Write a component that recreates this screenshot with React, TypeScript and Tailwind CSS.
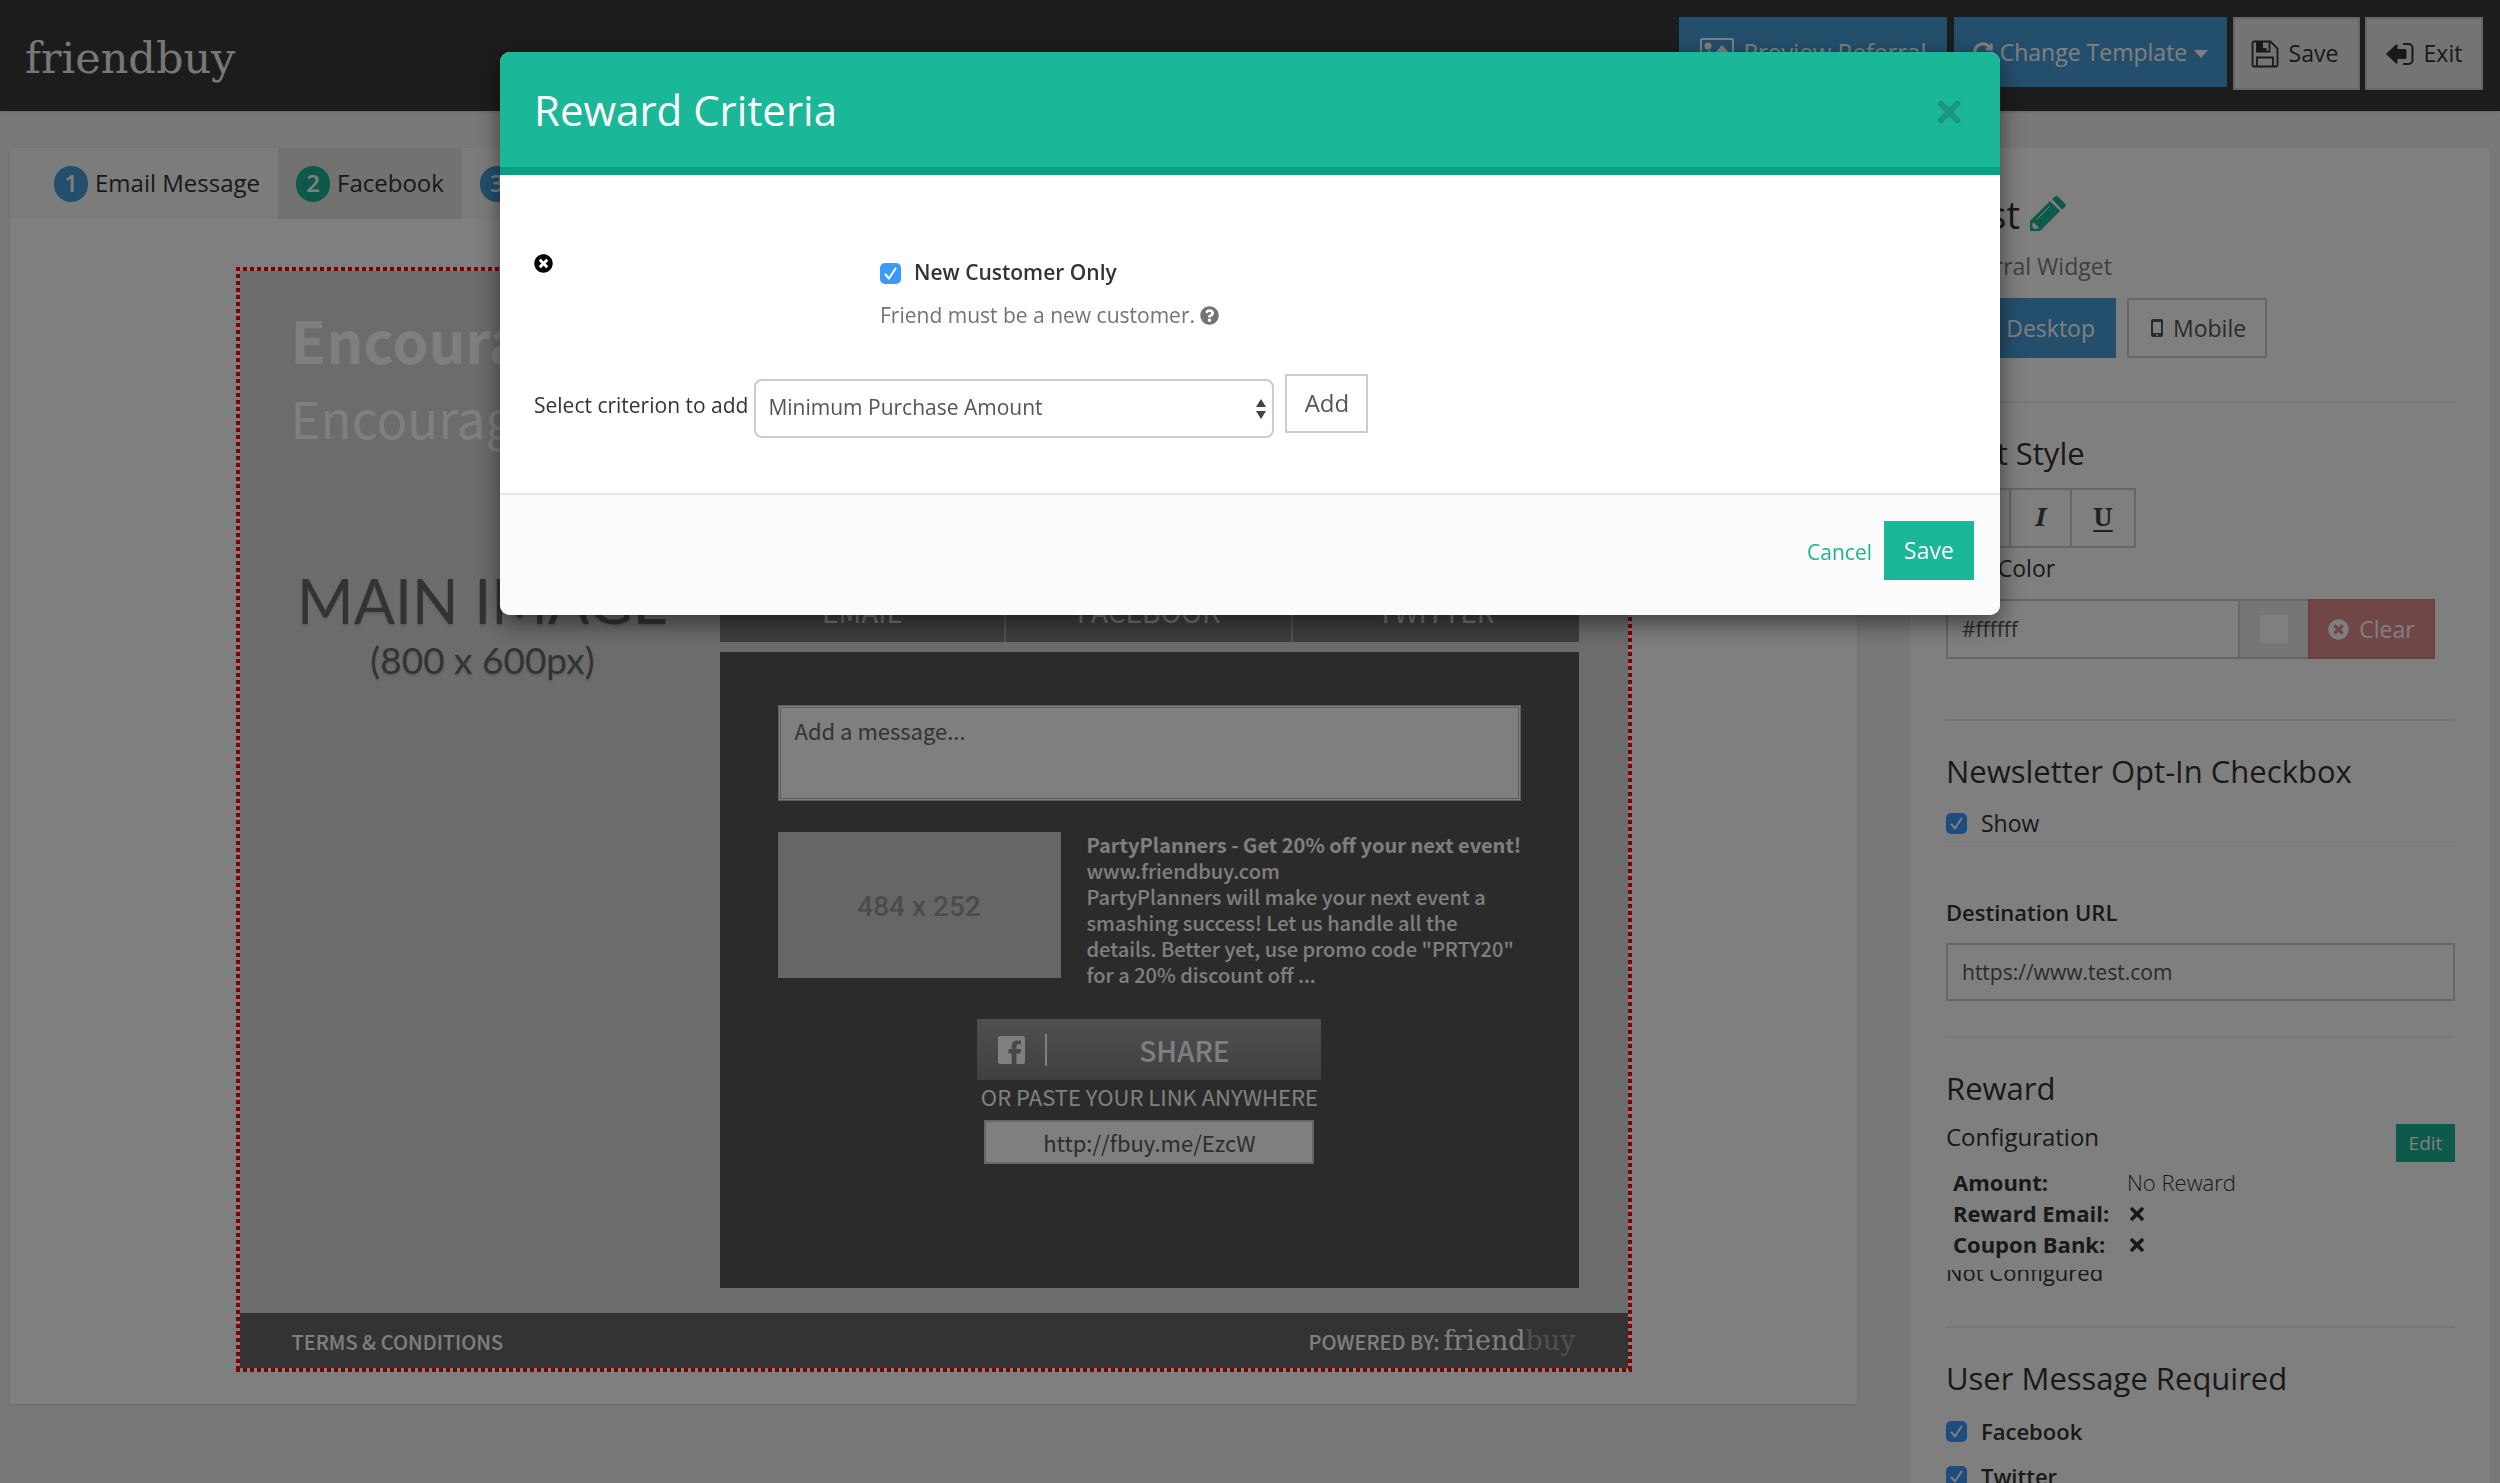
import { FaTimes, FaTimesCircle, FaQuestionCircle, FaDesktop, FaRedoAlt } from "react-icons/fa";
import type { ReactNode } from "react";

function PictureIcon() {
  return (
    <svg viewBox="0 0 34 28" className="h-7 w-[34px]" fill="currentColor" aria-hidden="true">
      <path fillRule="evenodd" d="M2 0h30a2 2 0 0 1 2 2v24a2 2 0 0 1-2 2H2a2 2 0 0 1-2-2V2a2 2 0 0 1 2-2zm0 2v24h30V2z" />
      <circle cx="8" cy="8" r="3.5" />
      <path d="M4 24v-7l5-5 5 4 8-9 9 10v7z" />
    </svg>
  );
}

function FloppyIcon() {
  return (
    <svg viewBox="0 0 28 28" className="size-7" fill="none" stroke="currentColor" strokeWidth="1.8" aria-hidden="true">
      <path d="M2.5 1.5h17l7 7v16.500a1.500 1.500 0 0 1-1.500 1.500h-22a1.500 1.500 0 0 1-1.500-1.500v-22a1.500 1.500 0 0 1 1-1.500z" />
      <path d="M6 26v-8.500h16v8.500M6 2v9.500h12.500v-9.500" />
      <path d="M6 2h6v9.500H6zM12 8h3.500v3h-3.500z" fill="currentColor" stroke="none" />
    </svg>
  );
}

function ExitIcon() {
  return (
    <svg viewBox="0 0 28 24" className="h-6 w-7" aria-hidden="true">
      <path d="M0 12 10 2.500q1.500-1 1.500 1V7H19a1.500 1.500 0 0 1 1.500 1.500v7A1.500 1.500 0 0 1 19 17h-7.500v3.500q0 2-1.500 1z" fill="currentColor" />
      <path d="M17 2h5.500a4 4 0 0 1 4 4v12a4 4 0 0 1-4 4H17" fill="none" stroke="currentColor" strokeWidth="2" />
    </svg>
  );
}

function PencilIcon() {
  return (
    <svg viewBox="0 0 36 36" className="size-9" aria-hidden="true">
      <path d="M0 25 20 5 30 15 10 35H0z" fill="#1ab394" />
      <path d="M22 3 24.500.800q1.700-1.500 3.500 0L35 7.500q1.500 1.800 0 3.500L32 13.500z" fill="#1ab394" />
      <path d="M7 23 20 10" stroke="#fff" strokeWidth="1" />
      <path d="M3.500 26.500 9 31.500 7 33 3 32.500 2 28z" fill="#fff" />
    </svg>
  );
}

function PhoneIcon() {
  return (
    <svg viewBox="0 0 12 18" className="h-[18px] w-3" aria-hidden="true">
      <path fillRule="evenodd" fill="currentColor" d="M2 0h8a2 2 0 0 1 2 2v14a2 2 0 0 1-2 2H2a2 2 0 0 1-2-2V2a2 2 0 0 1 2-2zm0 3v11h8V3zm4 12a1 1 0 1 0 0 2 1 1 0 0 0 0-2z" />
    </svg>
  );
}

function CaretIcon() {
  return (
    <svg viewBox="0 0 14 8" className="mt-1 h-2 w-[14px]" aria-hidden="true">
      <path d="M0 0h14L7 8z" fill="currentColor" />
    </svg>
  );
}

function Checkbox({ id }: { id: string }) {
  return (
    <span className="relative inline-flex size-[21px] shrink-0">
      <input id={id} type="checkbox" defaultChecked className="size-[21px] appearance-none rounded-[5px] bg-[#3b99fc]" />
      <svg viewBox="0 0 21 21" className="pointer-events-none absolute inset-0" fill="none" stroke="white" strokeWidth="2" strokeLinecap="round" strokeLinejoin="round" aria-hidden="true">
        <path d="M5.500 11.500 9 15.500 15.500 5.500" />
      </svg>
    </span>
  );
}

function Tab({ n, label, active }: { n: number; label: string; active?: boolean }) {
  return (
    <button className={active ? "flex items-center gap-[7px] bg-[#e5e5e5] px-[18px]" : "flex items-center gap-[7px] px-[18px]"}>
      <span className={active ? "flex h-9 w-[34px] items-center justify-center rounded-full bg-[#1ab394] pb-[2px] font-semibold text-white" : "flex h-9 w-[34px] items-center justify-center rounded-full bg-[#479fd8] pb-[2px] font-semibold text-white"}>
        {n}
      </span>
      <span className="pb-[2px]">{label}</span>
    </button>
  );
}

function Heading({ children }: { children: ReactNode }) {
  return <h3 className="mt-[30px] pb-[2px] text-[31px] leading-[40px]">{children}</h3>;
}

const dots =
  "bg-[repeating-linear-gradient(90deg,#f00_0_4px,transparent_4px_7px),repeating-linear-gradient(90deg,#f00_0_4px,transparent_4px_7px),repeating-linear-gradient(180deg,#f00_0_4px,transparent_4px_7px),repeating-linear-gradient(180deg,#f00_0_4px,transparent_4px_7px)] bg-[length:100%_4px,100%_4px,4px_100%,4px_100%] bg-[position:top_left,bottom_left,top_left,top_right] bg-no-repeat";

function Preview() {
  return (
    <div className={"mx-auto mt-12 w-[1396px] max-w-full p-1 " + dots}>
      <div className="bg-[#d8d8d8] font-['Noto_Sans_CJK_SC',sans-serif]">
        <div className="h-[257px] pl-[51px] pt-[26px] text-white">
          <h1 className="text-[58px] font-bold leading-[84px]">Encourage</h1>
          <h2 className="text-[51px] leading-[72px]">Encourage</h2>
        </div>
        <div className="flex pr-[51px]">
          <div className="flex w-[480px] shrink-0 flex-col items-center pl-[6px] pt-[35px] font-[Lato,sans-serif] text-[#686764] [text-shadow:0_2px_2px_#bbb]">
            <div className="text-[61px] leading-[76px]">MAIN IMAGE</div>
            <div className="text-[37px] leading-[42px]">(800 x 600px)</div>
          </div>
          <div className="flex-1 text-white">
            <div className="grid h-[114px] grid-cols-3 divide-x-2 divide-[#aaa] bg-[#7e7e7e] text-[28px] text-[#eee]">
              <button className="pt-[52px]">EMAIL</button>
              <button className="pt-[52px]">FACEBOOK</button>
              <button className="pt-[52px]">TWITTER</button>
            </div>
            <div className="mt-[10px] flex h-[636px] flex-col items-center bg-[#565656] px-[58px] pt-[53px]">
              <textarea aria-label="Message" placeholder="Add a message..." className="block h-24 w-full resize-none border-[3px] border-double border-[#b8b8b8] bg-white px-[14px] pt-[6px] text-[22px] leading-8 placeholder:text-[#666]" />
              <div className="mt-[31px] flex w-full gap-[26px]">
                <div className="flex h-[146px] w-[283px] shrink-0 items-center justify-center bg-[#ccc] pt-1 font-[Roboto,sans-serif] text-[28px] font-medium text-[#969696]">484 x 252</div>
                <p className="text-[20px] font-medium leading-[26px]">
                  <b className="block whitespace-nowrap font-bold">PartyPlanners - Get 20% off your next event!</b>
                  www.friendbuy.com
                  <br />
                  PartyPlanners will make your next event a smashing success! Let us handle all the details. Better yet, use promo code "PRTY20" for a 20% discount off ...
                </p>
              </div>
              <button className="mt-[31px] flex h-[61px] w-[344px] items-center bg-linear-to-b from-[#a0a0a0] to-[#808080] pl-[21px] text-[28px] font-medium">
                <svg viewBox="0 0 27 28" className="h-7 w-[27px]" aria-hidden="true">
                  <path fill="currentColor" fillRule="evenodd" d="M2 0h23a2 2 0 0 1 2 2v24a2 2 0 0 1-2 2h-6.500V17.500h4l.5-4.500h-4.500v-2.500c0-1.500.5-2.200 2.200-2.200H23V4.500h-3.500c-4 0-5.800 2-5.800 5.500v3H10.500v4.500h3.200V28H2a2 2 0 0 1-2-2V2a2 2 0 0 1 2-2z" />
                </svg>
                <span className="ml-5 h-8 w-[2px] bg-white" />
                <span className="flex-1 text-center">SHARE</span>
              </button>
              <label htmlFor="link" className="text-[22px] leading-8">OR PASTE YOUR LINK ANYWHERE</label>
              <input id="link" readOnly value="http://fbuy.me/EzcW" className="mt-2 h-11 w-[330px] border-2 border-[#ccc] bg-white text-center text-[22px] text-[#5a5a5a]" />
            </div>
          </div>
        </div>
        <div className="mt-[25px] flex h-[55px] items-center justify-between bg-[#666] pl-[52px] pr-[52px] pt-[2px] text-[20px] font-medium text-white">
          <a href="#terms">TERMS &amp; CONDITIONS</a>
          <span className="flex items-baseline gap-1">
            POWERED BY:
            <span className="font-['DejaVu_Serif',serif] text-[27px] font-normal">
              friend<span className="text-[#a0a0a0]">buy</span>
            </span>
          </span>
        </div>
      </div>
    </div>
  );
}

function Sidebar() {
  return (
    <aside className="h-[1500px] w-[579px] shrink-0 rounded-t bg-white px-[35px] pt-10 text-[22px] text-[#333]">
      <div className="flex items-center gap-[10px] text-[38px] leading-[52px]">
        Test
        <button aria-label="Rename">
          <PencilIcon />
        </button>
      </div>
      <p className="mt-[9px] text-[23px] leading-[34px] text-[#808080]">Referral Widget</p>
      <div className="mt-[15px] flex gap-[11px] text-[23px]">
        <button className="flex h-[60px] w-[170px] items-center justify-end gap-2 bg-[#479fd8] pr-[21px] text-white">
          <FaDesktop />
          Desktop
        </button>
        <button className="flex h-[60px] w-[140px] items-center gap-[10px] border-2 border-[#ccc] pl-[22px] text-[#555]">
          <PhoneIcon />
          Mobile
        </button>
      </div>
      <hr className="mt-[43px] border-t-2 border-[#eee]" />
      <Heading>Text Style</Heading>
      <div className="mt-[13px] flex h-[60px] w-[190px] divide-x-2 divide-[#ccc] border-2 border-[#ccc] font-['Noto_Serif','Liberation_Serif',serif] text-[26px] font-bold text-[#444]">
        <button className="w-[63px] pb-1">B</button>
        <button className="w-[61px] pb-1 italic">I</button>
        <button className="flex-1 pb-1 underline underline-offset-4">U</button>
      </div>
      <label htmlFor="color" className="mt-[3px] block pb-[2px] text-[23px] leading-[34px]">Text Color</label>
      <div className="mt-3 flex h-[60px]">
        <input id="color" defaultValue="#ffffff" className="h-[60px] w-[294px] border-2 border-[#ccc] pl-[14px] text-[21px] text-[#555]" />
        <span className="flex w-[68px] items-center justify-center border-y-2 border-[#ccc] bg-[#ececec]">
          <span className="size-7 bg-white" />
        </span>
        <button className="flex w-[127px] items-center justify-center gap-[10px] border-2 border-[#dc8080] bg-[#e28c8c] text-[23px] text-white">
          <FaTimesCircle className="text-[21px]" />
          Clear
        </button>
      </div>
      <hr className="mt-[60px] border-t-2 border-[#eee]" />
      <Heading>Newsletter Opt-In Checkbox</Heading>
      <div className="mt-3 flex h-[38px] items-center gap-[14px] border-b-2 border-[#f8f8f8] text-[23px]">
        <Checkbox id="show" />
        <label htmlFor="show">Show</label>
      </div>
      <label htmlFor="url" className="mt-[52px] block font-semibold leading-[34px]">Destination URL</label>
      <input id="url" defaultValue="https://www.test.com" className="mt-[14px] h-[58px] w-full border-2 border-[#ccc] pl-[14px] text-[21px] text-[#555]" />
      <hr className="mt-[35px] border-t-2 border-[#eee]" />
      <Heading>Reward</Heading>
      <div className="flex justify-between pt-[10px]">
        <div className="text-[24px] leading-[34px]">Configuration</div>
        <button className="mt-1 h-[38px] w-[59px] bg-[#1ab394] text-[19px] text-white">Edit</button>
      </div>
      <table className="ml-[7px] mt-[5px] text-left leading-[31px]">
        <tbody>
          <tr>
            <th className="w-[174px]">Amount:</th>
            <td className="font-light">No Reward</td>
          </tr>
          <tr>
            <th>Reward Email:</th>
            <td><FaTimes aria-label="No" className="text-[20px]" /></td>
          </tr>
          <tr>
            <th>Coupon Bank:</th>
            <td><FaTimes aria-label="No" className="text-[20px]" /></td>
          </tr>
        </tbody>
      </table>
      <div className="mt-[10px] flex h-[18px] items-end overflow-hidden leading-[32px]">Not Configured</div>
      <hr className="mt-[38px] border-t-2 border-[#eee]" />
      <Heading>User Message Required</Heading>
      <div className="mt-4 flex flex-col gap-[15px] font-semibold leading-[30px]">
        <div className="flex items-center gap-[14px]">
          <Checkbox id="facebook" />
          <label htmlFor="facebook">Facebook</label>
        </div>
        <div className="flex items-center gap-[14px]">
          <Checkbox id="twitter" />
          <label htmlFor="twitter">Twitter</label>
        </div>
      </div>
    </aside>
  );
}

function RewardModal() {
  return (
    <div className="fixed inset-0 bg-black/50 pt-[52px] text-[21px] text-[#333]">
      <div role="dialog" aria-label="Reward Criteria" className="mx-auto w-3/5 overflow-hidden rounded-[10px] bg-white shadow-[0_8px_24px_rgba(0,0,0,0.5)]">
        <div className="flex h-[123px] items-center justify-between border-b-8 border-[#06a282] bg-[#1ab798] pl-[34px] pr-[34px] text-white">
          <h2 className="text-[42px]">Reward Criteria</h2>
          <button aria-label="Close" className="pt-1 text-[34px] text-[#17987f]">
            <FaTimes />
          </button>
        </div>
        <div className="px-[34px] pb-[55px] pt-[79px]">
          <div className="grid grid-cols-[346px_1fr]">
            <button aria-label="Remove criterion" className="self-start text-[19px] text-black">
              <FaTimesCircle />
            </button>
            <div>
              <div className="flex items-center gap-[13px] pt-[3px] leading-[30px]">
                <Checkbox id="newcust" />
                <label htmlFor="newcust" className="pb-[2px] font-semibold">New Customer Only</label>
              </div>
              <p className="mt-[11px] flex items-center gap-[5px] leading-[30px] text-[#737373]">
                Friend must be a new customer.
                <FaQuestionCircle className="text-[19px]" />
              </p>
            </div>
          </div>
          <div className="mt-11 flex items-center">
            <label htmlFor="criterion">Select criterion to add</label>
            <div className="relative ml-[6px] mt-[5px]">
              <select id="criterion" className="h-[59px] w-[520px] appearance-none rounded-[8px] border-2 border-[#ccc] bg-white pb-[2px] pl-3 text-[#555]">
                <option>Minimum Purchase Amount</option>
              </select>
              <svg viewBox="0 0 10 20" className="pointer-events-none absolute right-2 top-5 h-5 w-[10px] text-[#444]" fill="currentColor" aria-hidden="true">
                <path d="M5 0l5 8H0zM5 20l5-8H0z" />
              </svg>
            </div>
            <button className="mb-[5px] ml-[11px] h-[59px] w-[83px] border-2 border-[#ccc] bg-white pb-[2px] text-[24px] text-[#555]">Add</button>
          </div>
        </div>
        <div className="flex h-[122px] items-center justify-end gap-3 border-t-2 border-[#e5e5e5] bg-[#fbfbfb] pb-[10px] pr-[26px]">
          <button className="pt-[6px] text-[#1ab394]">Cancel</button>
          <button className="h-[59px] w-[90px] bg-[#1ab798] text-[23px] font-medium text-white">Save</button>
        </div>
      </div>
    </div>
  );
}

export default function App() {
  return (
    <div className="h-screen overflow-hidden bg-[#f1f1f1] font-['Open_Sans',sans-serif] text-[#333]">
      <header className="flex h-[111px] items-start justify-between bg-[#393939] pl-[25px] pr-[17px] pt-[17px] text-[23px] shadow">
        <a href="#home" className="pt-4 font-['DejaVu_Serif',serif] text-[43px] leading-[50px] text-[#eee]">friendbuy</a>
        <nav className="flex items-start">
          <button className="mr-[7px] flex h-[70px] w-[268px] items-center justify-center gap-[10px] bg-[#479fd8] text-[24px] text-white">
            <PictureIcon />
            Preview Referral
          </button>
          <button className="mr-[6px] flex h-[70px] w-[273px] items-center justify-center gap-[7px] bg-[#479fd8] text-white">
            <FaRedoAlt className="text-[20px]" />
            Change Template
            <CaretIcon />
          </button>
          <button className="mr-[5px] flex h-[73px] w-[127px] items-center justify-center gap-[10px] border-2 border-[#ccc] bg-[#e8e8e8] pr-1">
            <FloppyIcon />
            Save
          </button>
          <button className="flex h-[73px] w-[118px] items-center justify-center gap-[10px] border-2 border-[#ccc] bg-[#e8e8e8]">
            <ExitIcon />
            Exit
          </button>
        </nav>
      </header>
      <main className="flex items-start gap-[54px] px-[10px] pt-[37px]">
        <section className="min-w-0 flex-1 bg-white pb-8 shadow">
          <div className="flex h-[71px] bg-[#f8f8f8] pl-[26px] text-[24px]">
            <Tab n={1} label="Email Message" />
            <Tab n={2} label="Facebook" active />
            <Tab n={3} label="Twitter" />
          </div>
          <Preview />
        </section>
        <Sidebar />
      </main>
      <RewardModal />
    </div>
  );
}
